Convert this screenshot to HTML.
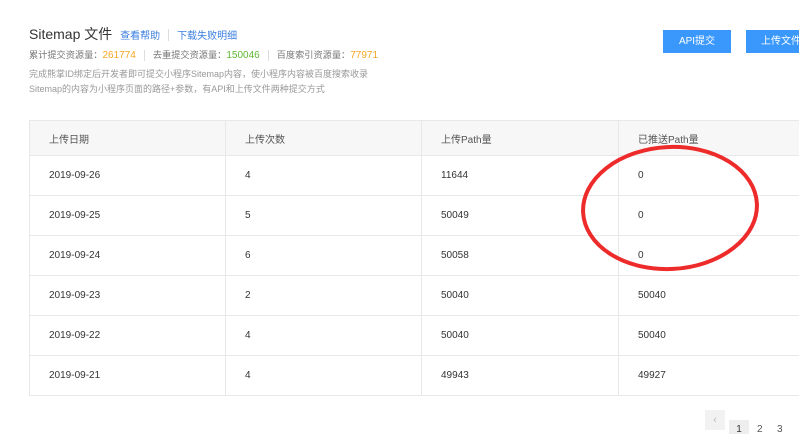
<!DOCTYPE html>
<html><head><meta charset="utf-8"><style>
body{margin:0;width:799px;height:432px;overflow:hidden;background:#fff;font-family:"Liberation Sans","Noto Sans CJK SC",sans-serif;position:relative}
.a{position:absolute;white-space:nowrap}
.t{position:absolute;left:29px;top:120px;width:784px;border-collapse:collapse;table-layout:fixed;font-size:10px;color:#333}
.t td{height:39px;border-bottom:1px solid #e8e8e8;border-right:1px solid #e8e8e8;padding:0 0 0 19px;width:177px}
.t tr:first-child td{height:34px;background:#f7f7f7;color:#555}
.t tr td:first-child{border-left:1px solid #e8e8e8}
.t{border-top:1px solid #e8e8e8}
.btn{position:absolute;top:30px;height:23px;background:#3a98fd;color:#fff;font-size:10px;line-height:23px;text-align:center}
.sep{display:inline-block;width:1px;height:11px;background:#ddd;margin:0 8px;vertical-align:middle}
</style></head><body>
<div class="a" style="left:29px;top:24px;font-size:14px;color:#333">Sitemap 文件 <span style="font-size:10px;color:#3a7de0;margin-left:4px">查看帮助</span><span style="display:inline-block;width:1px;height:12px;background:#ddd;margin:0 8px;vertical-align:middle"></span><span style="font-size:10px;color:#3a7de0">下载失败明细</span></div>
<div class="a" style="left:29px;top:47px;font-size:9.2px;color:#777">累计提交资源量：<span style="color:#f5a623;font-size:10px">261774</span><span class="sep"></span>去重提交资源量：<span style="color:#5fb832;font-size:10px">150046</span><span class="sep"></span>百度索引资源量：<span style="color:#f5a623;font-size:10px">77971</span></div>
<div class="a" style="left:29px;top:67px;font-size:9px;color:#999;line-height:15px">完成熊掌ID绑定后开发者即可提交小程序Sitemap内容，使小程序内容被百度搜索收录<br>Sitemap的内容为小程序页面的路径+参数，有API和上传文件两种提交方式</div>
<div class="btn" style="left:663px;width:68px">API提交</div>
<div class="btn" style="left:746px;width:70px">上传文件</div>
<table class="t" cellspacing="0">
<colgroup><col style="width:196px"><col style="width:196px"><col style="width:197px"><col style="width:195px"></colgroup>
<tr><td>上传日期</td><td>上传次数</td><td>上传Path量</td><td>已推送Path量</td></tr>
<tr><td>2019-09-26</td><td>4</td><td>11644</td><td>0</td></tr>
<tr><td>2019-09-25</td><td>5</td><td>50049</td><td>0</td></tr>
<tr><td>2019-09-24</td><td>6</td><td>50058</td><td>0</td></tr>
<tr><td>2019-09-23</td><td>2</td><td>50040</td><td>50040</td></tr>
<tr><td>2019-09-22</td><td>4</td><td>50040</td><td>50040</td></tr>
<tr><td>2019-09-21</td><td>4</td><td>49943</td><td>49927</td></tr>
</table>
<svg class="a" style="left:0;top:0" width="799" height="432"><ellipse cx="670" cy="208" rx="87" ry="61" fill="none" stroke="#ee2b2b" stroke-width="4" transform="rotate(-3 670 208)"/></svg>
<div class="a" style="left:705px;top:410px;width:20px;height:20px;background:#f2f2f2;color:#bbb;font-size:11px;text-align:center;line-height:20px">‹</div>
<div class="a" style="left:729px;top:420px;width:20px;height:14px;background:#eee;color:#333;font-size:10px;text-align:center;line-height:20px">1</div>
<div class="a" style="left:757px;top:424px;font-size:10px;color:#555">2</div>
<div class="a" style="left:777px;top:424px;font-size:10px;color:#555">3</div>
</body></html>
